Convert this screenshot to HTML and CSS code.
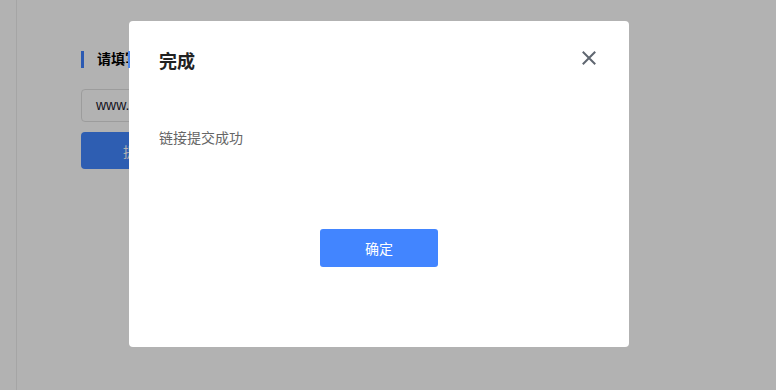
FILE: index.html
```html
<!DOCTYPE html>
<html lang="zh-CN">
<head>
<meta charset="utf-8">
<link rel="stylesheet" href="styles.css">
</head>
<body>
<div class="page">
  <aside class="side"></aside>
  <main class="content">
    <h2 class="sec-title">请填写需要提交的链接</h2>
    <div class="input">www.example.com</div>
    <button class="submit">提交链接</button>
  </main>
</div>
<div class="mask"></div>
<div class="dialog">
  <div class="dlg-head">
    <h3 class="dlg-title">完成</h3>
    <svg class="dlg-close" width="14" height="14" viewBox="0 0 14 14"><path d="M1.5 1.5 L12.5 12.5 M12.5 1.5 L1.5 12.5" stroke="#5f6670" stroke-width="2" stroke-linecap="square" fill="none"/></svg>
  </div>
  <p class="dlg-msg">链接提交成功</p>
  <div class="dlg-foot"><button class="ok">确定</button></div>
</div>
<div class="fringe"></div>
</body>
</html>
```
FILE: styles.css
```css
html, body { margin: 0; padding: 0; }
body {
  width: 776px; height: 390px; overflow: hidden; background: #fff;
  font-family: "Liberation Sans", "Noto Sans CJK SC", sans-serif;
  position: relative;
}
.page { display: flex; height: 390px; }
.side { width: 16px; border-right: 1px solid #ececec; flex: none; }
.content { padding: 51px 0 0 64px; flex: 1; }
.sec-title {
  margin: 0; height: 17px; line-height: 17px; font-size: 14px; font-weight: bold; color: #000;
  border-left: 3px solid #3f82ff; padding-left: 13px;
}
.input {
  margin-top: 21px; width: 400px; height: 31px; border: 1px solid #e0e0e0; border-radius: 4px;
  line-height: 31px; padding-left: 14px; font-size: 14px; color: #1a1a2e; box-sizing: content-box;
}
.submit {
  margin-top: 10px; width: 140px; height: 37px; border: 0; border-radius: 4px; background: #4287ff;
  color: #fff; font-size: 14px; font-family: inherit; display: block;
}
.mask { position: absolute; inset: 0; background: rgba(0,0,0,0.3); }
.dialog {
  position: absolute; left: 129px; top: 21px; width: 500px; height: 326px;
  background: #fff; border-radius: 4px; box-sizing: border-box; padding: 0 30px;
  display: flex; flex-direction: column;
}
.dlg-head { display: flex; justify-content: space-between; align-items: center; height: 80px; }
.dlg-title { margin: 0; font-size: 18px; font-weight: bold; color: #222; line-height: 24px; margin-top: 1px; }
.dlg-close { margin-right: 3px; margin-top: -7px; }
.dlg-msg { margin: 28px 0 0; font-size: 14px; color: #666; line-height: 18px; }
.dlg-foot { display: flex; justify-content: center; margin-top: 82px; }
.ok {
  width: 118px; height: 38px; border: 0; border-radius: 3px; background: #4285ff; color: #fff;
  font-size: 14px; font-family: inherit;
}
.fringe { position: absolute; left: 128px; top: 51px; width: 2px; height: 17px; background: #4a88f0; }
```
